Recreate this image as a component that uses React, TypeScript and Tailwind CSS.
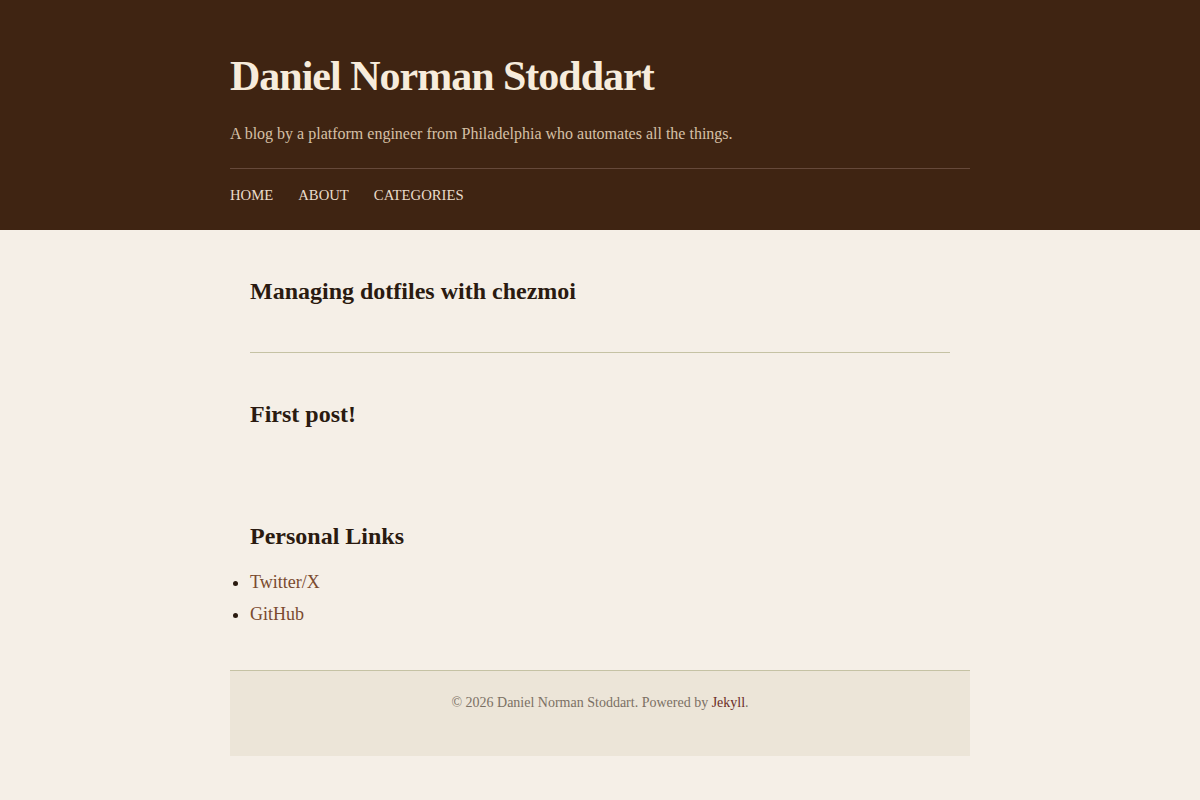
const posts = [
  { title: "Managing dotfiles with chezmoi", href: "#" },
  { title: "First post!", href: "#" },
];

const links = [
  { label: "Twitter/X", href: "#" },
  { label: "GitHub", href: "#" },
];

export default function App() {
  return (
    <div className="min-h-[800px] bg-[#f5efe7] font-['Liberation_Serif',serif] text-[#2a1a10]">
      <header className="bg-[#3f2412]">
        <div className="mx-auto w-[740px] pt-[51px] pb-[24px]">
          <h1 className="text-[42px] font-bold leading-[50px] tracking-[-1px] text-[#f7ecdc]">
            Daniel Norman Stoddart
          </h1>
          <p className="mt-[21px] text-[16px] leading-[24px] text-[#d6c0a6]">
            A blog by a platform engineer from Philadelphia who automates all the things.
          </p>
          <nav className="mt-[22px] flex gap-[25px] border-t border-[#66493a] pt-[15px] text-[14.7px] leading-[22px] text-[#eadccb]">
            <a href="#">HOME</a>
            <a href="#">ABOUT</a>
            <a href="#">CATEGORIES</a>
          </nav>
        </div>
      </header>

      <main className="mx-auto w-[740px] px-[20px] pt-[46px]">
        {posts.map((post, i) => (
          <article
            key={post.title}
            className={
              i < posts.length - 1
                ? "border-b border-[#c5c2a4] pb-[46px] mb-[46px]"
                : "pb-[46px]"
            }
          >
            <h2 className="text-[24px] font-bold leading-[30px]">
              <a href={post.href}>{post.title}</a>
            </h2>
          </article>
        ))}

        <section className="mt-[46px]">
          <h2 className="text-[24px] font-bold leading-[30px]">Personal Links</h2>
          <ul className="mt-[15px] list-disc text-[18px] leading-[32px] marker:text-[#2a1a10]">
            {links.map((link) => (
              <li key={link.label}>
                <a href={link.href} className="text-[#7a4a2e]">
                  {link.label}
                </a>
              </li>
            ))}
          </ul>
        </section>
      </main>

      <footer className="mx-auto mt-[40px] w-[740px] border-t border-[#c5c2a4] bg-[#ece5d8] pt-[22px] pb-[43px] text-center text-[14px] leading-[20px] text-[#7b7064]">
        © 2026 Daniel Norman Stoddart. Powered by{" "}
        <a href="#" className="text-[#6b2c26]">
          Jekyll
        </a>
        .
      </footer>
    </div>
  );
}
